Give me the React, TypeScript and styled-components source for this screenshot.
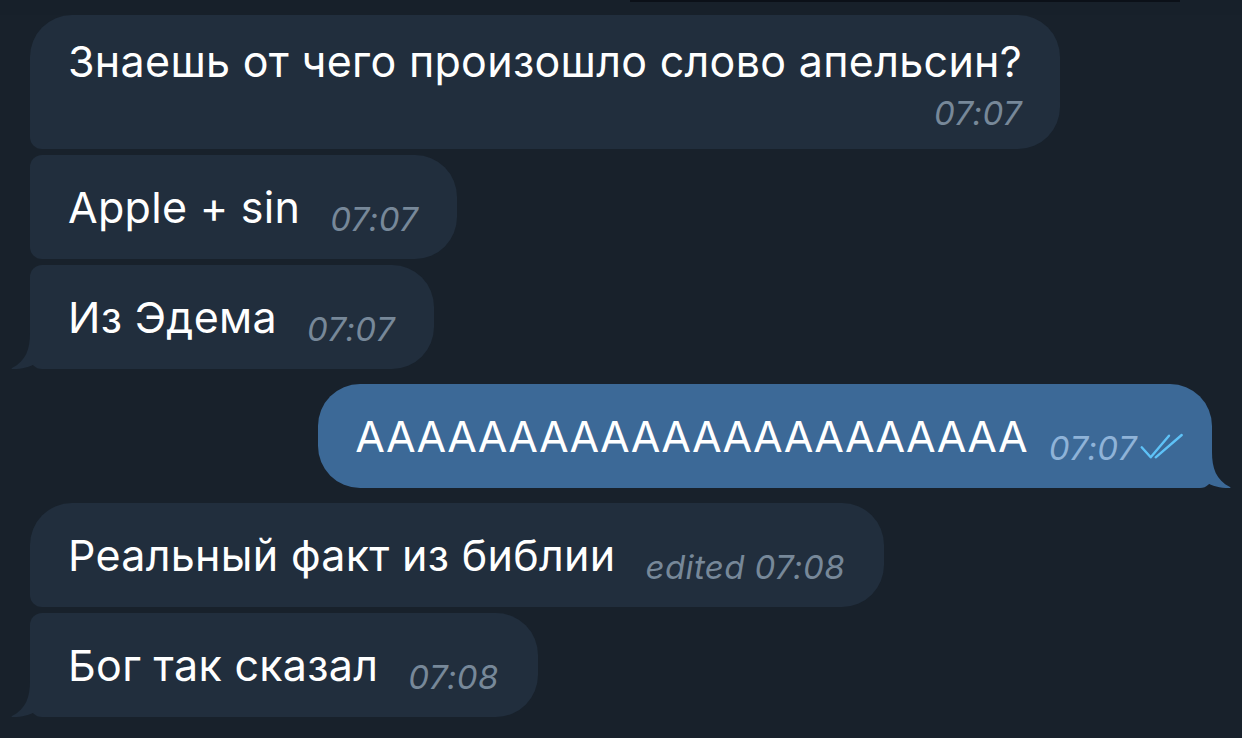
import React from "react";
import styled, { createGlobalStyle } from "styled-components";

const GlobalStyle = createGlobalStyle`
  html, body {
    margin: 0;
    padding: 0;
    background: #18212b;
  }
  body {
    font-family: Inter, "Noto Sans", sans-serif;
    -webkit-font-smoothing: antialiased;
  }
`;

type Position = "first" | "middle" | "last" | "single";

interface Message {
  id: number;
  text: string;
  time: string;
  out?: boolean;
  edited?: boolean;
  stacked?: boolean;
  position: Position;
}

const messages: Message[] = [
  { id: 1, text: "Знаешь от чего произошло слово апельсин?", time: "07:07", position: "first", stacked: true },
  { id: 2, text: "Apple + sin", time: "07:07", position: "middle" },
  { id: 3, text: "Из Эдема", time: "07:07", position: "last" },
  { id: 4, text: "АААААААААААААААААААААА", time: "07:07", position: "single", out: true },
  { id: 5, text: "Реальный факт из библии", time: "07:08", position: "first", edited: true },
  { id: 6, text: "Бог так сказал", time: "07:08", position: "last" },
];

const Checks = () => (
  <CheckIcon width="46" height="28" viewBox="0 0 46 28" fill="none">
    <path d="M2.7 15.3 L11.7 25.3 L30 3.7" stroke="#5ec2f7" strokeWidth="2.4" strokeLinecap="round" strokeLinejoin="round" />
    <path d="M16.7 25.3 L42.7 3" stroke="#5ec2f7" strokeWidth="2.4" strokeLinecap="round" />
  </CheckIcon>
);

const TailIn = () => (
  <TailLeft width="30" height="36" viewBox="0 0 30 36">
    <path d="M30 0 H20 C20 16 16 28 2 35 C1 35.5 1.5 36 3 36 C12 36 20 34 26 30 L30 30 Z" fill="#212e3d" />
  </TailLeft>
);

const TailOut = () => (
  <TailRight width="30" height="36" viewBox="0 0 30 36">
    <path d="M0 0 H10 C10 16 14 28 28 35 C29 35.5 28.5 36 27 36 C18 36 10 34 4 30 L0 30 Z" fill="#3c6997" />
  </TailRight>
);

const App: React.FC = () => {
  return (
    <>
      <GlobalStyle />
      <Screen>
        <TopEdge>
          <TopLine />
        </TopEdge>
        <List>
          {messages.map((m) => (
            <Row key={m.id} $out={!!m.out} $position={m.position}>
              <Bubble $out={!!m.out} $position={m.position} $stacked={!!m.stacked}>
                <Text>{m.text}</Text>
                <Meta $out={!!m.out} $stacked={!!m.stacked}>
                  {m.edited ? "edited " : ""}
                  {m.time}
                  {m.out && <Checks />}
                </Meta>
                {m.position === "last" && !m.out && <TailIn />}
                {m.out && <TailOut />}
              </Bubble>
            </Row>
          ))}
        </List>
      </Screen>
    </>
  );
};

const Screen = styled.div`
  width: 1242px;
  height: 738px;
  overflow: hidden;
  background: #18212b;
  display: flex;
  flex-direction: column;
`;

const TopEdge = styled.div`
  height: 15px;
  display: flex;
  justify-content: flex-end;
  padding-right: 62px;
  background: #17202a;
`;

const TopLine = styled.div`
  width: 550px;
  height: 2px;
  background: #0b1018;
`;

const List = styled.div`
  display: flex;
  flex-direction: column;
  padding: 0 30px;
`;

const Row = styled.div<{ $out: boolean; $position: Position }>`
  display: flex;
  justify-content: ${(p) => (p.$out ? "flex-end" : "flex-start")};
  margin-bottom: ${(p) => (p.$position === "last" || p.$position === "single" ? "15px" : "6px")};
`;

const bigR = 42;
const smallR = 12;

const Bubble = styled.div<{ $out: boolean; $position: Position; $stacked: boolean }>`
  position: relative;
  display: flex;
  flex-direction: ${(p) => (p.$stacked ? "column" : "row")};
  align-items: ${(p) => (p.$stacked ? "stretch" : "center")};
  min-height: 104px;
  box-sizing: border-box;
  padding: ${(p) => (p.$stacked ? "20px 38px 14px 38px" : p.$out ? "0 27px 0 37px" : "0 39px 0 38px")};
  background: ${(p) => (p.$out ? "#3c6997" : "#212e3d")};
  color: #ffffff;
  border-radius: ${(p) => {
    if (p.$out) return `${bigR}px ${bigR}px ${smallR}px ${bigR}px`;
    const tl = p.$position === "first" || p.$position === "single" ? bigR : smallR;
    return `${tl}px ${bigR}px ${bigR}px ${smallR}px`;
  }};
`;

const Text = styled.span`
  font-family: Inter, "Noto Sans", sans-serif;
  font-size: 43px;
  line-height: 52px;
  letter-spacing: 0.3px;
  white-space: nowrap;
`;

const Meta = styled.span<{ $out: boolean; $stacked: boolean }>`
  display: flex;
  align-items: center;
  align-self: ${(p) => (p.$stacked ? "flex-end" : "center")};
  margin-left: ${(p) => (p.$stacked ? "0" : p.$out ? "21px" : "30px")};
  margin-top: ${(p) => (p.$stacked ? "4px" : "24px")};
  font-family: Inter, "Noto Sans", sans-serif;
  font-style: italic;
  font-size: 33px;
  letter-spacing: 0.4px;
  line-height: 44px;
  color: ${(p) => (p.$out ? "#8fb3d8" : "#778899")};
  white-space: pre;
`;

const CheckIcon = styled.svg`
  margin-left: 2px;
  margin-top: -4px;
`;

const TailLeft = styled.svg`
  position: absolute;
  left: -20px;
  bottom: 0;
`;

const TailRight = styled.svg`
  position: absolute;
  right: -20px;
  bottom: 0;
`;

export default App;
